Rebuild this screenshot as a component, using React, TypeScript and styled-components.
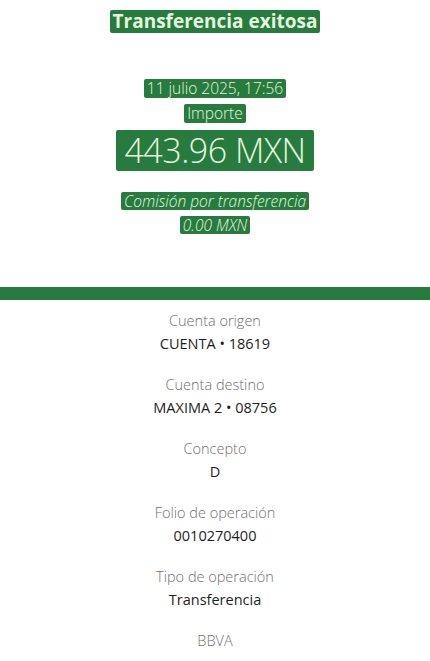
import styled, { createGlobalStyle } from 'styled-components';

const GlobalStyle = createGlobalStyle`
  html, body {
    margin: 0;
    padding: 0;
    background: #ffffff;
  }
  body {
    font-family: "Open Sans", "Noto Sans", sans-serif;
  }
`;

const Page = styled.div`
  width: 430px;
  height: 661px;
  overflow: hidden;
  display: flex;
  flex-direction: column;
  align-items: center;
`;

const Header = styled.div`
  display: flex;
  flex-direction: column;
  align-items: center;
  padding-top: 10px;
`;

const Mark = styled.span<{ $size: number; $weight?: number; $italic?: boolean }>`
  display: inline-block;
  background: #287b3e;
  color: #e4f7de;
  font-size: ${p => p.$size}px;
  font-weight: ${p => p.$weight ?? 300};
  font-style: ${p => (p.$italic ? 'italic' : 'normal')};
  line-height: 1.2;
  padding: 0 ${p => (p.$size > 30 ? 8 : 3)}px;
  border-radius: 2px;
  letter-spacing: ${p => (p.$size > 30 ? '-0.5px' : '0')};
`;

const Title = styled.div`
  margin-bottom: 44px;
`;

const Line = styled.div<{ $gap?: number }>`
  margin-top: ${p => p.$gap ?? 0}px;
`;

const Bar = styled.div`
  width: 100%;
  height: 13px;
  background: #287b3e;
  margin-top: 51px;
`;

const Details = styled.div`
  display: flex;
  flex-direction: column;
  align-items: center;
  gap: 21px;
  padding-top: 11px;
`;

const Field = styled.div`
  display: flex;
  flex-direction: column;
  align-items: center;
  gap: 3px;
`;

const Label = styled.div`
  font-size: 14.5px;
  font-weight: 300;
  color: #6f6f6f;
  line-height: 20px;
`;

const Value = styled.div`
  font-size: 14.5px;
  font-weight: 400;
  color: #1e1e1e;
  line-height: 20px;
`;

const fields = [
  { label: 'Cuenta origen', value: 'CUENTA • 18619' },
  { label: 'Cuenta destino', value: 'MAXIMA 2 • 08756' },
  { label: 'Concepto', value: 'D' },
  { label: 'Folio de operación', value: '0010270400' },
  { label: 'Tipo de operación', value: 'Transferencia' },
];

export default function App() {
  return (
    <Page>
      <GlobalStyle />
      <Header>
        <Title>
          <Mark $size={19} $weight={700}>Transferencia exitosa</Mark>
        </Title>
        <Line>
          <Mark $size={15.5}>11 julio 2025, 17:56</Mark>
        </Line>
        <Line $gap={3}>
          <Mark $size={15.5}>Importe</Mark>
        </Line>
        <Line $gap={6}>
          <Mark $size={34}>443.96 MXN</Mark>
        </Line>
        <Line $gap={19}>
          <Mark $size={15.5} $italic>Comisión por transferencia</Mark>
        </Line>
        <Line $gap={2}>
          <Mark $size={15.5} $italic>0.00 MXN</Mark>
        </Line>
      </Header>
      <Bar />
      <Details>
        {fields.map(f => (
          <Field key={f.label}>
            <Label>{f.label}</Label>
            <Value>{f.value}</Value>
          </Field>
        ))}
        <Field>
          <Label>BBVA</Label>
        </Field>
      </Details>
    </Page>
  );
}
